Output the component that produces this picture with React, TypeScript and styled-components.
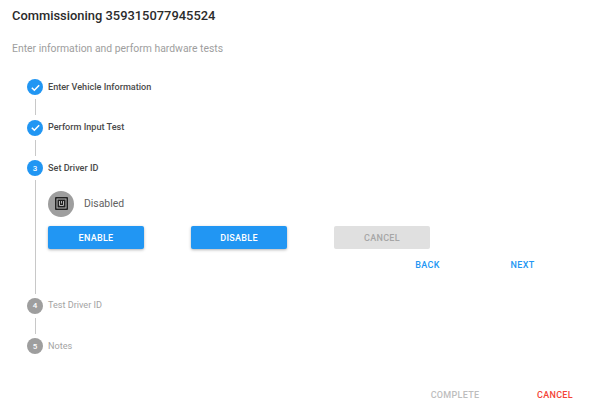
import React from "react";
import styled, { createGlobalStyle } from "styled-components";

const GlobalStyle = createGlobalStyle`
  html, body {
    margin: 0;
    padding: 0;
    background: #fff;
  }
  body {
    font-family: Roboto, "Liberation Sans", sans-serif;
  }
`;

const Dialog = styled.div`
  width: 602px;
  height: 409px;
  display: flex;
  flex-direction: column;
  overflow: hidden;
  background: #fff;
`;

const Title = styled.h2`
  margin: 0;
  padding: 8px 12px 0;
  font-size: 12.9px;
  line-height: 16px;
  font-weight: 500;
  color: #2b2b2b;
`;

const Subtitle = styled.p`
  margin: 0;
  padding: 17px 12px 0;
  font-size: 10.4px;
  line-height: 16px;
  color: #9e9e9e;
`;

const Stepper = styled.div`
  display: flex;
  flex-direction: column;
  padding: 22px 0 0 27px;
`;

const StepHead = styled.div`
  display: flex;
  align-items: center;
  gap: 5px;
  height: 16px;
`;

const StepCircle = styled.span<{ $active: boolean }>`
  width: 16px;
  height: 16px;
  border-radius: 50%;
  flex: none;
  display: flex;
  align-items: center;
  justify-content: center;
  background: ${(p) => (p.$active ? "#2196f3" : "#9e9e9e")};
  color: #fff;
  font-size: 8px;
  font-weight: 500;
`;

const StepLabel = styled.span<{ $active: boolean }>`
  margin-top: -1px;
  font-size: 9.1px;
  font-weight: ${(p) => (p.$active ? 500 : 400)};
  color: ${(p) => (p.$active ? "#4a4a4a" : "#a3a3a3")};
`;

const Connector = styled.div`
  height: 16px;
  margin: 4px 0 4.5px 8px;
  border-left: 1px solid #c8c8c8;
`;

const StepBody = styled.div`
  margin: 4px 0 4px 8px;
  padding: 10.5px 0 17px 12px;
  border-left: 1px solid #c8c8c8;
  width: 522px;
`;

const StatusRow = styled.div`
  display: flex;
  align-items: center;
  gap: 10px;
  height: 26px;
`;

const StatusBadge = styled.span`
  width: 26px;
  height: 26px;
  border-radius: 50%;
  background: #9e9e9e;
  display: flex;
  align-items: center;
  justify-content: center;
`;

const StatusText = styled.span`
  font-size: 10.4px;
  color: #616161;
`;

const ActionRow = styled.div`
  display: flex;
  gap: 47px;
  margin-top: 9.5px;
`;

const ActionButton = styled.button<{ $disabled?: boolean }>`
  width: 96px;
  height: 23px;
  border: 0;
  padding: 0;
  border-radius: 2px;
  font-family: inherit;
  font-size: 9px;
  font-weight: 500;
  letter-spacing: 0.3px;
  background: ${(p) => (p.$disabled ? "#e0e0e0" : "#2196f3")};
  color: ${(p) => (p.$disabled ? "#a6a6a6" : "#fff")};
  box-shadow: ${(p) =>
    p.$disabled ? "none" : "0 1px 3px rgba(0, 0, 0, 0.3)"};
`;

const StepNav = styled.div`
  display: flex;
  justify-content: flex-end;
  margin-top: 4.5px;
`;

const TextButton = styled.button<{ $color: string; $width: number }>`
  width: ${(p) => p.$width}px;
  height: 23px;
  border: 0;
  padding: 0;
  background: transparent;
  font-family: inherit;
  font-size: 9px;
  font-weight: 500;
  letter-spacing: 0.3px;
  text-align: center;
  color: ${(p) => p.$color};
`;

const Footer = styled.div`
  display: flex;
  justify-content: flex-end;
  gap: 40px;
  padding: 29px 17px 0 0;
`;

const CheckIcon = () => (
  <svg width="11" height="11" viewBox="0 0 24 24" fill="none">
    <path d="M4 12.5l5.5 5.5L20 7" stroke="#fff" strokeWidth="3.4" />
  </svg>
);

const TagIcon = () => (
  <svg width="13" height="13" viewBox="0 0 13 13" fill="none">
    <rect width="13" height="13" rx="1" fill="#212121" />
    <rect x="2" y="2" width="9" height="9" stroke="#b5b5b5" strokeWidth="1" />
    <path d="M4.5 4v4.5h4V4M6.5 4v2.5" stroke="#b5b5b5" strokeWidth="1" />
  </svg>
);

export default function App() {
  return (
    <Dialog>
      <GlobalStyle />
      <Title>Commissioning 359315077945524</Title>
      <Subtitle>Enter information and perform hardware tests</Subtitle>
      <Stepper>
        <StepHead>
          <StepCircle $active>
            <CheckIcon />
          </StepCircle>
          <StepLabel $active>Enter Vehicle Information</StepLabel>
        </StepHead>
        <Connector />
        <StepHead>
          <StepCircle $active>
            <CheckIcon />
          </StepCircle>
          <StepLabel $active>Perform Input Test</StepLabel>
        </StepHead>
        <Connector />
        <StepHead>
          <StepCircle $active>3</StepCircle>
          <StepLabel $active>Set Driver ID</StepLabel>
        </StepHead>
        <StepBody>
          <StatusRow>
            <StatusBadge>
              <TagIcon />
            </StatusBadge>
            <StatusText>Disabled</StatusText>
          </StatusRow>
          <ActionRow>
            <ActionButton>ENABLE</ActionButton>
            <ActionButton>DISABLE</ActionButton>
            <ActionButton $disabled>CANCEL</ActionButton>
          </ActionRow>
          <StepNav>
            <TextButton $color="#2196f3" $width={95}>
              BACK
            </TextButton>
            <TextButton $color="#2196f3" $width={95}>
              NEXT
            </TextButton>
          </StepNav>
        </StepBody>
        <StepHead>
          <StepCircle $active={false}>4</StepCircle>
          <StepLabel $active={false}>Test Driver ID</StepLabel>
        </StepHead>
        <Connector />
        <StepHead>
          <StepCircle $active={false}>5</StepCircle>
          <StepLabel $active={false}>Notes</StepLabel>
        </StepHead>
      </Stepper>
      <Footer>
        <TextButton $color="#bdbdbd" $width={60}>
          COMPLETE
        </TextButton>
        <TextButton $color="#f44336" $width={60}>
          CANCEL
        </TextButton>
      </Footer>
    </Dialog>
  );
}
